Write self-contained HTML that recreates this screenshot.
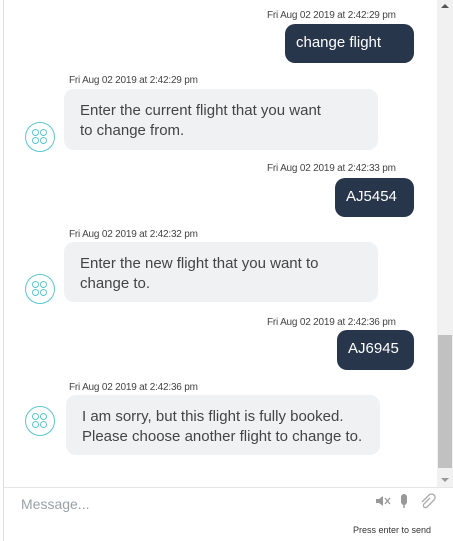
<!DOCTYPE html>
<html><head><style>
*{margin:0;padding:0;box-sizing:border-box}
body{width:453px;height:541px;background:#fff;font-family:"Liberation Sans",sans-serif;position:relative;overflow:hidden;color:#333}
.lb{position:absolute;left:3px;top:0;width:1px;height:541px;background:#ddd}
.ts{position:absolute;font-size:10px;color:#444;white-space:nowrap;letter-spacing:-0.2px}
.u{position:absolute;background:#27364b;color:#fff;font-size:15px;border-radius:10px;padding-left:11px;line-height:38px}
.b{position:absolute;background:#f0f1f3;color:#444;font-size:15px;border-radius:10px;padding:12px 0 12px 16px;line-height:20px;width:314px;white-space:nowrap}
.av{position:absolute;width:30px;height:30px;border:1px solid #5ac6cc;border-radius:50%}
.av i{position:absolute;width:7px;height:7px;border:1.3px solid #5ac6cc;border-radius:50%}
.sb{position:absolute;left:437px;top:0;width:16px;height:487px;background:#f1f1f1}
.th{position:absolute;left:438px;top:335px;width:14px;height:133px;background:#c1c1c1}
</style></head><body>
<div class="lb"></div>
<div class="sb"></div><div class="th"></div>
<div style="position:absolute;left:441px;top:4px;width:0;height:0;border-left:4px solid transparent;border-right:4px solid transparent;border-bottom:4px solid #555"></div>
<div style="position:absolute;left:441px;top:478px;width:0;height:0;border-left:4px solid transparent;border-right:4px solid transparent;border-top:4px solid #999"></div>

<div class="ts" style="left:267px;top:10px">Fri Aug 02 2019 at 2:42:29 pm</div>
<div class="u" style="left:285px;top:24px;width:129px;height:39px">change flight</div>

<div class="ts" style="left:69px;top:75px">Fri Aug 02 2019 at 2:42:29 pm</div>
<div class="b" style="left:64px;top:89px;height:61px">Enter the current flight that you want<br>to change from.</div>
<div class="av" style="left:25px;top:122px"><i style="left:6px;top:6px"></i><i style="left:14px;top:6px"></i><i style="left:6px;top:14px"></i><i style="left:14px;top:14px"></i></div>

<div class="ts" style="left:267px;top:163px">Fri Aug 02 2019 at 2:42:33 pm</div>
<div class="u" style="left:335px;top:178px;width:79px;height:39px">AJ5454</div>

<div class="ts" style="left:69px;top:229px">Fri Aug 02 2019 at 2:42:32 pm</div>
<div class="b" style="left:64px;top:242px;height:60px">Enter the new flight that you want to<br>change to.</div>
<div class="av" style="left:25px;top:274px"><i style="left:6px;top:6px"></i><i style="left:14px;top:6px"></i><i style="left:6px;top:14px"></i><i style="left:14px;top:14px"></i></div>

<div class="ts" style="left:267px;top:317px">Fri Aug 02 2019 at 2:42:36 pm</div>
<div class="u" style="left:337px;top:330px;width:77px;height:40px">AJ6945</div>

<div class="ts" style="left:69px;top:382px">Fri Aug 02 2019 at 2:42:36 pm</div>
<div class="b" style="left:66px;top:395px;height:60px">I am sorry, but this flight is fully booked.<br>Please choose another flight to change to.</div>
<div class="av" style="left:25px;top:406px"><i style="left:6px;top:6px"></i><i style="left:14px;top:6px"></i><i style="left:6px;top:14px"></i><i style="left:14px;top:14px"></i></div>

<div style="position:absolute;left:3px;top:487px;width:450px;height:1px;background:#e6e6e6"></div>
<div style="position:absolute;left:21px;top:496px;font-size:14px;color:#9aa0a6">Message...</div>
<svg style="position:absolute;left:374px;top:493px" width="64" height="16" viewBox="0 0 64 16">
<path d="M2 6h3l4-3v10l-4-3H2z" fill="#999"/><path d="M11 5l5 6M16 5l-5 6" stroke="#999" stroke-width="1.3"/>
<rect x="27" y="1" width="6" height="11" rx="3" fill="#999"/><path d="M30 12v3" stroke="#999" stroke-width="1.5"/>
<path d="M56 5l-6 6a2 2 0 0 0 3 3l7-7a3.5 3.5 0 0 0-5-5l-7 7" fill="none" stroke="#aaa" stroke-width="1.3"/>
</svg>
<div style="position:absolute;left:353px;top:525px;font-size:9px;color:#333">Press enter to send</div>
</body></html>
